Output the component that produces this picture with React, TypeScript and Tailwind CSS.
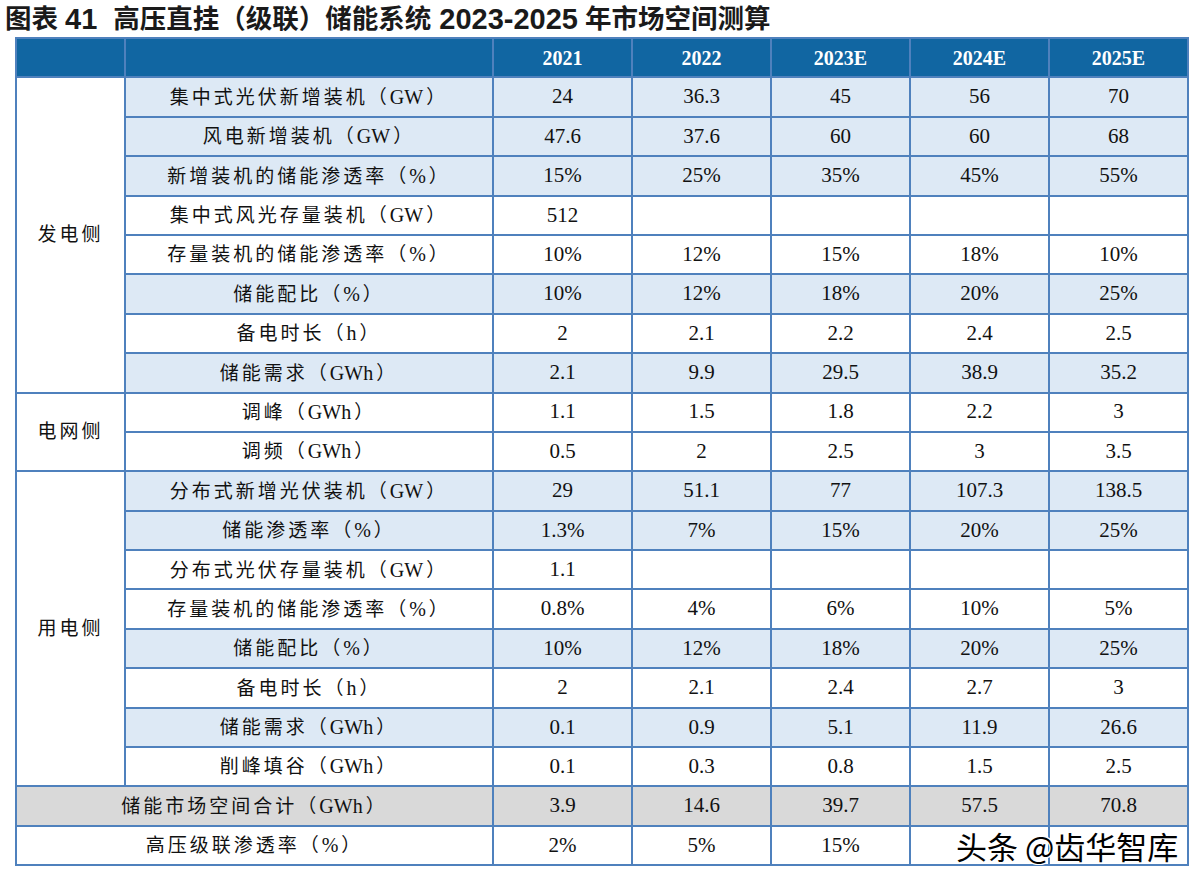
import React from "react";

type Row = { label: string; values: string[]; shade: boolean };

const years = ["2021", "2022", "2023E", "2024E", "2025E"];

const groups: { name: string; rows: Row[] }[] = [
  {
    name: "发电侧",
    rows: [
      { label: "集中式光伏新增装机（GW）", values: ["24", "36.3", "45", "56", "70"], shade: true },
      { label: "风电新增装机（GW）", values: ["47.6", "37.6", "60", "60", "68"], shade: true },
      { label: "新增装机的储能渗透率（%）", values: ["15%", "25%", "35%", "45%", "55%"], shade: true },
      { label: "集中式风光存量装机（GW）", values: ["512", "", "", "", ""], shade: false },
      { label: "存量装机的储能渗透率（%）", values: ["10%", "12%", "15%", "18%", "10%"], shade: false },
      { label: "储能配比（%）", values: ["10%", "12%", "18%", "20%", "25%"], shade: true },
      { label: "备电时长（h）", values: ["2", "2.1", "2.2", "2.4", "2.5"], shade: false },
      { label: "储能需求（GWh）", values: ["2.1", "9.9", "29.5", "38.9", "35.2"], shade: true },
    ],
  },
  {
    name: "电网侧",
    rows: [
      { label: "调峰（GWh）", values: ["1.1", "1.5", "1.8", "2.2", "3"], shade: false },
      { label: "调频（GWh）", values: ["0.5", "2", "2.5", "3", "3.5"], shade: false },
    ],
  },
  {
    name: "用电侧",
    rows: [
      { label: "分布式新增光伏装机（GW）", values: ["29", "51.1", "77", "107.3", "138.5"], shade: true },
      { label: "储能渗透率（%）", values: ["1.3%", "7%", "15%", "20%", "25%"], shade: true },
      { label: "分布式光伏存量装机（GW）", values: ["1.1", "", "", "", ""], shade: false },
      { label: "存量装机的储能渗透率（%）", values: ["0.8%", "4%", "6%", "10%", "5%"], shade: false },
      { label: "储能配比（%）", values: ["10%", "12%", "18%", "20%", "25%"], shade: true },
      { label: "备电时长（h）", values: ["2", "2.1", "2.4", "2.7", "3"], shade: false },
      { label: "储能需求（GWh）", values: ["0.1", "0.9", "5.1", "11.9", "26.6"], shade: true },
      { label: "削峰填谷（GWh）", values: ["0.1", "0.3", "0.8", "1.5", "2.5"], shade: false },
    ],
  },
];

const cell = "border-2 border-[#4f81bd] p-0 text-center align-middle";
const label = "text-[19px] tracking-[3px]";
const num = "text-[21px]";

// latin bits (GW, %, h) keep normal spacing, the chinese gets the wide tracking
function Label({ text }: { text: string }) {
  const parts = text.split(/([A-Za-z%]+)/);
  return (
    <>
      {parts.map((p, i) =>
        /^[A-Za-z%]+$/.test(p) ? (
          <span key={i} className="mr-[3px] text-[20px] tracking-normal">
            {p}
          </span>
        ) : (
          <span key={i}>{p}</span>
        )
      )}
    </>
  );
}

export default function App() {
  return (
    <div className="relative h-[888px] w-[1204px] bg-white text-[#111] [font-family:'Liberation_Serif','Noto_Sans_CJK_SC',serif]">
      <h1 className="flex h-[37px] items-center whitespace-nowrap pl-[5px] text-[26.5px] font-bold leading-[36px] text-[#1a1a1a] [font-family:'Liberation_Sans','Noto_Sans_CJK_SC',sans-serif]">
        <span>图表</span>
        <span className="ml-[7px] text-[29px]">41</span>
        <span className="ml-[16px]">高压直挂（级联）储能系统</span>
        <span className="ml-[8px] text-[29px]">2023-2025</span>
        <span className="ml-[7px]">年市场空间测算</span>
      </h1>

      <table className="ml-[15px] w-[1173px] table-fixed border-collapse">
        <colgroup>
          <col className="w-[109px]" />
          <col className="w-[368px]" />
          <col className="w-[139px]" />
          <col className="w-[139px]" />
          <col className="w-[139px]" />
          <col className="w-[139px]" />
          <col className="w-[139px]" />
        </colgroup>
        <thead>
          <tr className="h-[39.4px] bg-[#1166a2] text-white">
            <th className={cell}></th>
            <th className={cell}></th>
            {years.map((y) => (
              <th key={y} className={`${cell} text-[20px] font-bold`}>
                {y}
              </th>
            ))}
          </tr>
        </thead>
        <tbody>
          {groups.map((g) =>
            g.rows.map((r, i) => (
              <tr key={g.name + r.label} className="h-[39.4px]">
                {i === 0 && (
                  <td rowSpan={g.rows.length} className={`${cell} ${label} bg-white`}>
                    {g.name}
                  </td>
                )}
                <td className={`${cell} ${label} ${r.shade ? "bg-[#dde9f5]" : "bg-white"}`}>
                  <Label text={r.label} />
                </td>
                {r.values.map((v, j) => (
                  <td key={j} className={`${cell} ${num} ${r.shade ? "bg-[#dde9f5]" : "bg-white"}`}>
                    {v}
                  </td>
                ))}
              </tr>
            ))
          )}
          <tr className="h-[39.4px] bg-[#d9d9d9]">
            <td colSpan={2} className={`${cell} ${label}`}>
              <Label text="储能市场空间合计（GWh）" />
            </td>
            {["3.9", "14.6", "39.7", "57.5", "70.8"].map((v, j) => (
              <td key={j} className={`${cell} ${num}`}>
                {v}
              </td>
            ))}
          </tr>
          <tr className="h-[39.4px] bg-white">
            <td colSpan={2} className={`${cell} ${label}`}>
              <Label text="高压级联渗透率（%）" />
            </td>
            {["2%", "5%", "15%", "", ""].map((v, j) => (
              <td key={j} className={`${cell} ${num}`}>
                {v}
              </td>
            ))}
          </tr>
        </tbody>
      </table>

      {/* watermark */}
      <div className="absolute left-[956px] top-[826px] text-[31px] leading-[40px] text-black [font-family:'Noto_Sans_CJK_SC',sans-serif] [text-shadow:1px_1px_0_#fff,-1px_-1px_0_#fff,1px_-1px_0_#fff,-1px_1px_0_#fff]">
        头条 @齿华智库
      </div>
    </div>
  );
}
